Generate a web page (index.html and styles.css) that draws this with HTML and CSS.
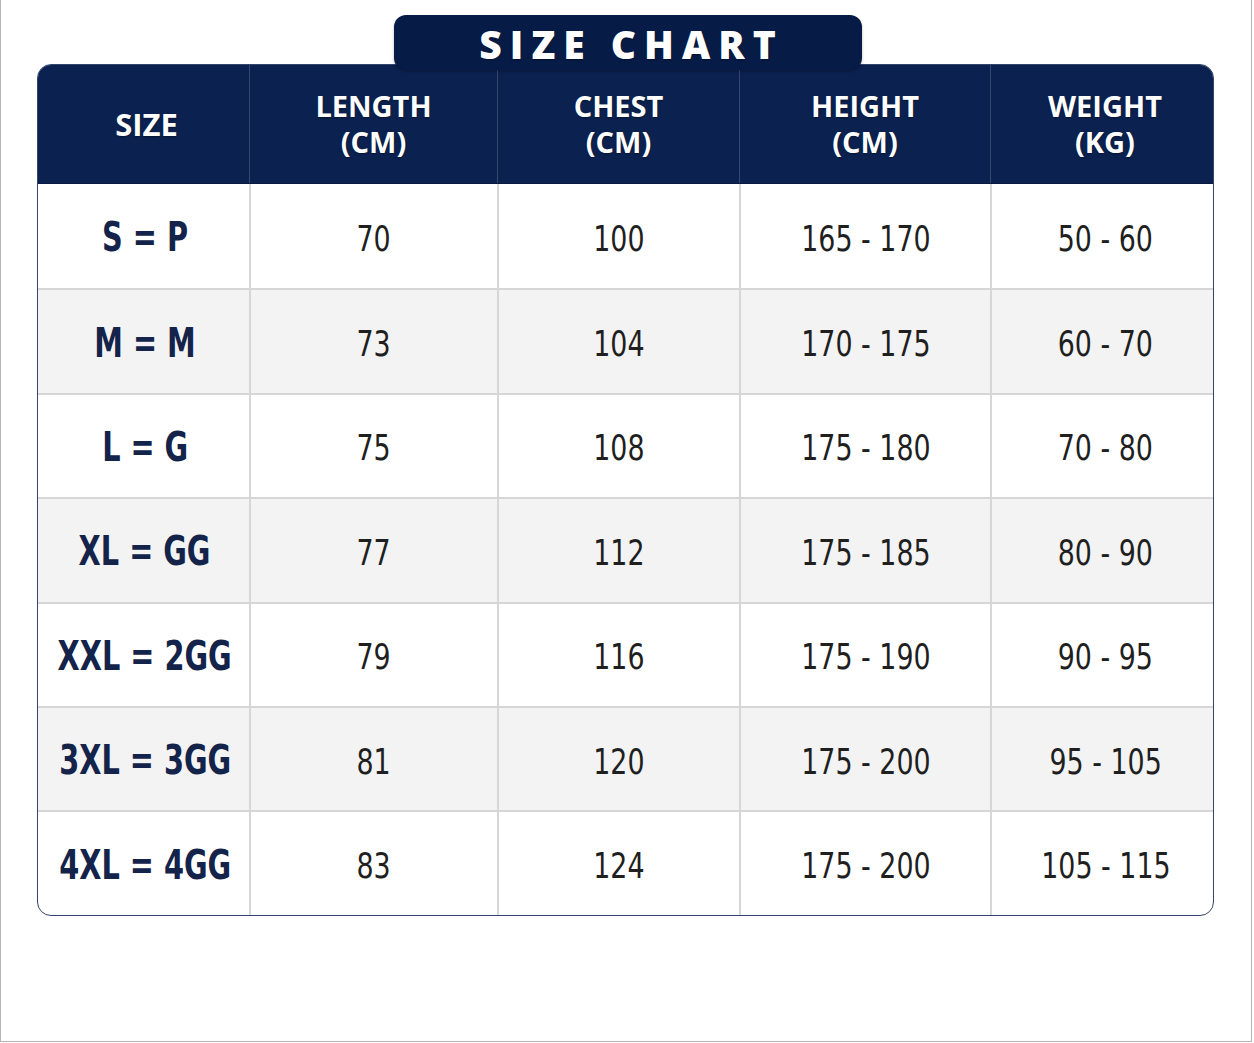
FILE: index.html
```html
<!DOCTYPE html>
<html lang="en">
<head>
<meta charset="utf-8">
<title>Size Chart</title>
<link rel="stylesheet" href="styles.css">
</head>
<body>
<div class="page">
  <div class="title-tab"><span class="title">SIZE CHART</span></div>
  <div class="chart">
    <div class="row head">
      <div class="cell first">SIZE</div>
      <div class="cell">LENGTH<br>(CM)</div>
      <div class="cell">CHEST<br>(CM)</div>
      <div class="cell">HEIGHT<br>(CM)</div>
      <div class="cell">WEIGHT<br>(KG)</div>
    </div>
    <div class="row">
      <div class="cell size"><span class="v">S = P</span></div><div class="cell"><span class="v">70</span></div><div class="cell"><span class="v">100</span></div><div class="cell"><span class="v">165 - 170</span></div><div class="cell"><span class="v">50 - 60</span></div>
    </div>
    <div class="row alt">
      <div class="cell size"><span class="v">M = M</span></div><div class="cell"><span class="v">73</span></div><div class="cell"><span class="v">104</span></div><div class="cell"><span class="v">170 - 175</span></div><div class="cell"><span class="v">60 - 70</span></div>
    </div>
    <div class="row">
      <div class="cell size"><span class="v">L = G</span></div><div class="cell"><span class="v">75</span></div><div class="cell"><span class="v">108</span></div><div class="cell"><span class="v">175 - 180</span></div><div class="cell"><span class="v">70 - 80</span></div>
    </div>
    <div class="row alt">
      <div class="cell size"><span class="v">XL = GG</span></div><div class="cell"><span class="v">77</span></div><div class="cell"><span class="v">112</span></div><div class="cell"><span class="v">175 - 185</span></div><div class="cell"><span class="v">80 - 90</span></div>
    </div>
    <div class="row">
      <div class="cell size"><span class="v">XXL = 2GG</span></div><div class="cell"><span class="v">79</span></div><div class="cell"><span class="v">116</span></div><div class="cell"><span class="v">175 - 190</span></div><div class="cell"><span class="v">90 - 95</span></div>
    </div>
    <div class="row alt">
      <div class="cell size"><span class="v">3XL = 3GG</span></div><div class="cell"><span class="v">81</span></div><div class="cell"><span class="v">120</span></div><div class="cell"><span class="v">175 - 200</span></div><div class="cell"><span class="v">95 - 105</span></div>
    </div>
    <div class="row last">
      <div class="cell size"><span class="v">4XL = 4GG</span></div><div class="cell"><span class="v">83</span></div><div class="cell"><span class="v">124</span></div><div class="cell"><span class="v">175 - 200</span></div><div class="cell"><span class="v">105 - 115</span></div>
    </div>
  </div>
</div>
</body>
</html>
```
FILE: styles.css
```css
* { box-sizing: border-box; }
html, body { margin: 0; padding: 0; background: #ffffff; }
.page {
  width: 1252px;
  height: 1042px;
  border-left: 1px solid #b5b5b5;
  border-right: 1px solid #b5b5b5;
  border-bottom: 1px solid #b5b5b5;
  padding-top: 15px;
  display: flex;
  flex-direction: column;
  align-items: center;
}
.title-tab {
  position: relative;
  z-index: 2;
  width: 468px;
  height: 55px;
  margin-bottom: -6px;
  margin-left: 3px;
  background: #061c47;
  border-radius: 12px;
  box-shadow: 0 2px 3px rgba(0,0,0,0.25);
  display: flex;
  align-items: center;
  justify-content: center;
}
.title {
  font-family: "Open Sans", sans-serif;
  font-weight: 800;
  font-size: 39px;
  letter-spacing: 8px;
  margin-right: -8px;
  color: #ffffff;
  line-height: 1;
  padding-top: 1px;
  text-shadow: 0 1px 2px rgba(0,0,0,0.4);
}
.chart {
  width: 1177px;
  margin-left: -1px;
  border: 1.5px solid #34456c;
  border-radius: 14px;
  overflow: hidden;
  background: #ffffff;
}
.row {
  display: grid;
  grid-template-columns: 211px 248px 242px 251px 1fr;
  height: 104.4px;
  border-top: 2px solid #d6d6d6;
}
.row.alt { background: #f3f3f3; }
.row.head {
  height: 119px;
  border-top: none;
  background: #0b2251;
  border-bottom: 1px solid #0a1a3e;
}
.row.head + .row { border-top: none; }
.cell {
  display: flex;
  align-items: center;
  justify-content: center;
  text-align: center;
  font-family: "DejaVu Sans Condensed", "DejaVu Sans", sans-serif;
  font-size: 36px;
  color: #1f1f1f;
  padding-top: 4px;
}
.cell:nth-child(5) { padding-left: 6px; }
.cell .v {
  display: inline-block;
  white-space: nowrap;
  transform: scaleX(0.83);
}
.cell + .cell { border-left: 2px solid #d6d6d6; }
.row.head .cell {
  font-family: "Open Sans", sans-serif;
  font-weight: 700;
  font-size: 29px;
  line-height: 36px;
  color: #ffffff;
  padding-top: 0;
  text-shadow: 0 1px 2px rgba(0,0,0,0.45);
}
.row.head .cell.first { font-size: 31px; padding-left: 6px; }
.row.head .cell:nth-child(5) { padding-left: 6px; }
.row.head .cell + .cell { border-left: 1px solid #34476f; }
.cell.size {
  font-weight: 700;
  font-size: 41px;
  color: #13234a;
  padding-top: 2px;
  padding-left: 3px;
}
.cell.size .v { transform: scaleX(0.78); }
```
